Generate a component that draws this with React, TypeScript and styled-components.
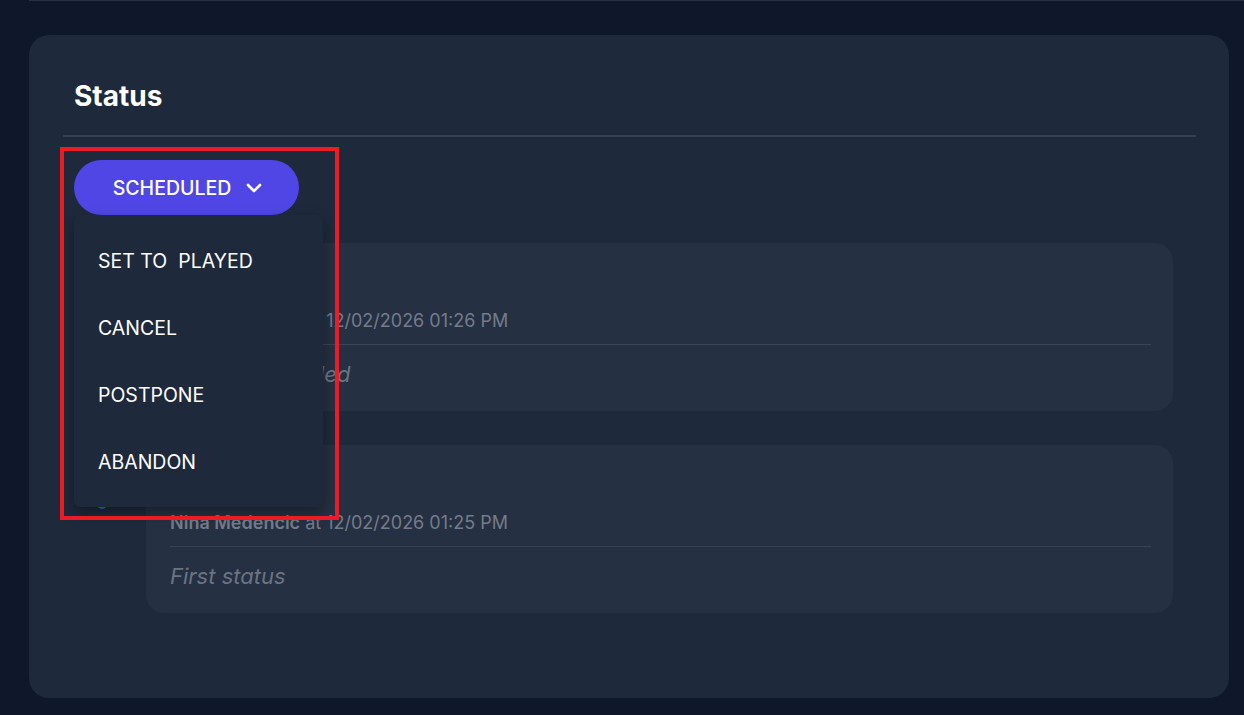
import React from "react";
import styled, { createGlobalStyle } from "styled-components";

type Entry = {
  id: number;
  title: string;
  author: string;
  date: string;
  note: string;
};

const entries: Entry[] = [
  {
    id: 2,
    title: "Scheduled",
    author: "Nina Medencic",
    date: "12/02/2026 01:26 PM",
    note: "Status scheduled",
  },
  {
    id: 1,
    title: "Created",
    author: "Nina Medencic",
    date: "12/02/2026 01:25 PM",
    note: "First status",
  },
];

const actions = ["SET TO  PLAYED", "CANCEL", "POSTPONE", "ABANDON"];

const ChevronDown: React.FC = () => (
  <svg width="16" height="10" viewBox="0 0 16 10" fill="none">
    <polyline
      points="2,2 8,8 14,2"
      stroke="#ffffff"
      strokeWidth="2.6"
      strokeLinecap="round"
      strokeLinejoin="round"
    />
  </svg>
);

export default function App() {
  return (
    <Page>
      <GlobalStyle />
      <TopRule />
      <Panel>
        <Header>
          <Title>Status</Title>
        </Header>
        <Body>
          <StatusPicker>
            <StatusButton>
              SCHEDULED
              <ChevronDown />
            </StatusButton>
            <Menu>
              {actions.map((a) => (
                <MenuItem key={a}>{a}</MenuItem>
              ))}
            </Menu>
          </StatusPicker>
          <Timeline>
            {entries.map((e) => (
              <Row key={e.id}>
                <Rail>
                  <Dot />
                </Rail>
                <EntryCard>
                  <EntryTitle>{e.title}</EntryTitle>
                  <Meta>
                    <Author>{e.author}</Author> at {e.date}
                  </Meta>
                  <Note>{e.note}</Note>
                </EntryCard>
              </Row>
            ))}
          </Timeline>
        </Body>
      </Panel>
      <Highlight />
    </Page>
  );
}

const GlobalStyle = createGlobalStyle`
  html, body {
    margin: 0;
    background: #0f172a;
  }
  body {
    font-family: Inter, "Noto Sans", sans-serif;
    color: #ffffff;
  }
`;

const Page = styled.div`
  position: relative;
  min-height: 715px;
  background: #0f172a;
  overflow: hidden;
`;

const TopRule = styled.div`
  height: 1px;
  margin-left: 29px;
  background: #283244;
`;

const Panel = styled.section`
  margin: 34px 15px 0 29px;
  height: 663px;
  box-sizing: border-box;
  padding: 0 33px 0 34px;
  background: #1e293b;
  border-radius: 20px;
`;

const Header = styled.div`
  height: 102px;
  box-sizing: border-box;
  padding: 22px 0 0 11px;
  display: flex;
  align-items: center;
  border-bottom: 2px solid #353f4f;
`;

const Title = styled.h2`
  margin: 0;
  font-size: 28px;
  font-weight: 700;
  color: #ffffff;
`;

const Body = styled.div`
  padding: 23px 23px 0 11px;
`;

const StatusPicker = styled.div`
  position: relative;
  width: 225px;
`;

const StatusButton = styled.button`
  width: 225px;
  height: 55px;
  border: none;
  border-radius: 28px;
  background: #4f46e5;
  color: #ffffff;
  font-family: Inter, sans-serif;
  font-size: 19.5px;
  font-weight: 500;
  display: flex;
  align-items: center;
  justify-content: center;
  gap: 15px;
  padding: 0 0 0 2px;
  cursor: pointer;
`;

const Menu = styled.ul`
  position: absolute;
  top: 100%;
  left: 0;
  z-index: 5;
  width: 249px;
  margin: 0;
  padding: 12px 0;
  list-style: none;
  background: #1e293b;
  border-radius: 6px;
  box-shadow: 0 6px 14px rgba(0, 0, 0, 0.35);
`;

const MenuItem = styled.li`
  height: 67px;
  display: flex;
  align-items: center;
  padding-left: 24px;
  font-size: 19.5px;
  color: #ffffff;
  white-space: pre;
  cursor: pointer;
`;

const Timeline = styled.div`
  margin-top: 28px;
  display: flex;
  flex-direction: column;
  gap: 34px;
`;

const Row = styled.div`
  display: grid;
  grid-template-columns: 72px 1fr;
`;

const Rail = styled.div`
  position: relative;
`;

const Dot = styled.span`
  display: block;
  width: 10px;
  height: 10px;
  margin: 54px 0 0 23px;
  border-radius: 50%;
  background: #2563eb;
`;

const EntryCard = styled.article`
  background: #253042;
  border-radius: 18px;
  padding: 18px 22px 24px 24px;
`;

const EntryTitle = styled.div`
  font-size: 18px;
  line-height: 28px;
  font-weight: 600;
  color: #e5e7eb;
`;

const Meta = styled.div`
  margin-top: 20px;
  padding-bottom: 11px;
  border-bottom: 1px solid #3a4455;
  font-size: 18px;
  line-height: 24px;
  color: #747c8a;
`;

const Author = styled.span`
  font-weight: 600;
`;

const Note = styled.div`
  margin-top: 16px;
  font-size: 22px;
  line-height: 26px;
  font-style: italic;
  color: #6b7482;
`;

const Highlight = styled.div`
  position: absolute;
  left: 60px;
  top: 147px;
  width: 279px;
  height: 373px;
  box-sizing: border-box;
  border: 4px solid #ed1c24;
  pointer-events: none;
  z-index: 10;
`;
